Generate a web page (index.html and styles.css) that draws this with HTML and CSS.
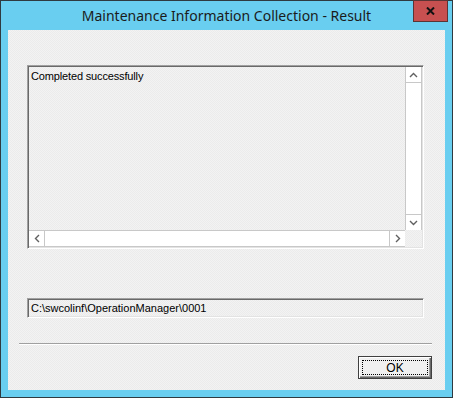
FILE: index.html
```html
<!DOCTYPE html>
<html lang="en">
<head>
    <meta charset="UTF-8">
    <title>Maintenance Information Collection - Result</title>
    <link rel="stylesheet" href="styles.css">
</head>
<body>
    <div class="window">
        <div class="titlebar">
            <span class="title">Maintenance Information Collection - Result</span>
            <div class="close">
                <svg width="9" height="8" viewBox="0 0 9 8"><path d="M1 0.5 L8 7.5 M8 0.5 L1 7.5" stroke="#111" stroke-width="2"/></svg>
            </div>
        </div>

        <div class="client">
            <!-- Result log -->
            <div class="logbox">
                <div class="logtext">Completed successfully</div>
                <div class="vscroll">
                    <div class="sbtn up">
                        <svg width="9" height="6" viewBox="0 0 9 6"><polyline points="1,5 4.5,1.5 8,5" fill="none" stroke="#606060" stroke-width="1.4"/></svg>
                    </div>
                    <div class="sbtn down">
                        <svg width="9" height="6" viewBox="0 0 9 6"><polyline points="1,1 4.5,4.5 8,1" fill="none" stroke="#606060" stroke-width="1.4"/></svg>
                    </div>
                </div>
                <div class="hscroll">
                    <div class="sbtn left">
                        <svg width="6" height="9" viewBox="0 0 6 9"><polyline points="5,1 1.5,4.5 5,8" fill="none" stroke="#606060" stroke-width="1.4"/></svg>
                    </div>
                    <div class="sbtn right">
                        <svg width="6" height="9" viewBox="0 0 6 9"><polyline points="1,1 4.5,4.5 1,8" fill="none" stroke="#606060" stroke-width="1.4"/></svg>
                    </div>
                </div>
            </div>

            <!-- Output folder -->
            <div class="pathbox">C:\swcolinf\OperationManager\0001</div>

            <div class="separator"></div>

            <div class="buttons">
                <button class="btn"><span class="focus">OK</span></button>
            </div>
        </div>
    </div>
</body>
</html>
```

FILE: styles.css
```css
/* Page */
body {
    margin: 0;
    font-family: 'Liberation Sans', Arial, sans-serif;
    font-size: 11px;
    color: #000;
}

/* Window frame */
.window {
    width: 451px;
    height: 396px;
    border: 1px solid #2f3a40;
    background: #69cef0;
    display: flex;
    flex-direction: column;
}

.titlebar {
    height: 29px;
    position: relative;
    display: flex;
    justify-content: center;
}

.title {
    font-family: 'Noto Sans', 'Open Sans', sans-serif;
    font-size: 14px;
    color: #1b1b1b;
    margin-top: 5px;
}

.close {
    position: absolute;
    top: -1px;
    right: 4px;
    width: 33px;
    height: 20px;
    background: #c75050;
    border: 1px solid #5b3434;
    display: flex;
    align-items: center;
    justify-content: center;
}

/* Dialog client area */
.client {
    margin: 0 7px 7px 7px;
    flex: 1;
    background: conic-gradient(#f3f3f3 25%, #ebebeb 0 50%, #f3f3f3 0 75%, #ebebeb 0) 0 0 / 2px 2px;
    padding: 35px 21px 0 19px;
    display: flex;
    flex-direction: column;
}

/* Read-only text area */
.logbox {
    height: 184px;
    border: 1px solid;
    border-color: #a0a0a0 #fff #fff #a0a0a0;
    box-shadow: inset 1px 1px #696969, inset -1px -1px #e3e3e3;
    padding: 1px;
    display: grid;
    grid-template-columns: 1fr 17px;
    grid-template-rows: 1fr 17px;
    box-sizing: border-box;
}

.logtext {
    padding: 3px 0 0 2px;
    line-height: 13px;
    letter-spacing: -0.15px;
}

.vscroll {
    grid-column: 2;
    grid-row: 1;
    background: #fff;
    border-left: 1px solid #c8c8c8;
    border-right: 1px solid #c8c8c8;
    display: flex;
    flex-direction: column;
    justify-content: space-between;
}

.hscroll {
    grid-column: 1;
    grid-row: 2;
    background: #fff;
    border-top: 1px solid #c8c8c8;
    border-bottom: 1px solid #c8c8c8;
    display: flex;
    justify-content: space-between;
}

.sbtn {
    display: flex;
    align-items: center;
    justify-content: center;
}

.sbtn.up, .sbtn.down {
    height: 15px;
}

.sbtn.up {
    border-bottom: 1px solid #c8c8c8;
}

.sbtn.down {
    border-top: 1px solid #c8c8c8;
}

.sbtn.left, .sbtn.right {
    width: 15px;
}

.sbtn.left {
    border-right: 1px solid #c8c8c8;
}

.sbtn.right {
    border-left: 1px solid #c8c8c8;
}

/* Path field */
.pathbox {
    margin-top: 49px;
    height: 20px;
    box-sizing: border-box;
    border: 1px solid;
    border-color: #a0a0a0 #fff #fff #a0a0a0;
    box-shadow: inset 1px 1px #696969, inset -1px -1px #e3e3e3;
    padding: 3px 0 0 3px;
    line-height: 13px;
}

.separator {
    margin: 25px -8px 0 -8px;
    height: 1px;
    background: #a0a0a0;
    border-bottom: 1px solid #fff;
}

.buttons {
    display: flex;
    justify-content: flex-end;
    margin-top: 11px;
    margin-right: -8px;
}

.btn {
    width: 74px;
    height: 23px;
    padding: 3px;
    border: 1px solid #404040;
    background: #f0f0f0;
    box-shadow: inset 1px 1px #fff, inset -1px -1px #696969, inset -2px -2px #a0a0a0;
    font-family: 'Liberation Sans', Arial, sans-serif;
    font-size: 12px;
    display: flex;
}

.focus {
    flex: 1;
    border: 1px dotted #000;
    display: flex;
    align-items: center;
    justify-content: center;
}
```
